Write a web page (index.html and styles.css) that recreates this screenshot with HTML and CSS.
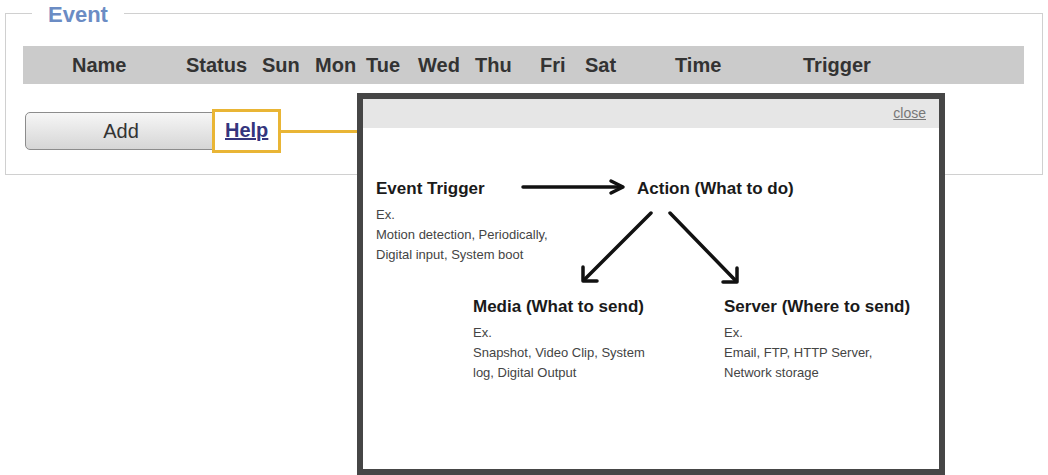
FILE: index.html
```html
<!DOCTYPE html>
<html>
<head>
<meta charset="utf-8">
<title>Event</title>
<link rel="stylesheet" href="styles.css">
</head>
<body>
<div class="page">
  <fieldset class="event">
    <legend class="event-title">Event</legend>
    <div class="thead">
      <span>Name</span>
      <span>Status</span>
      <span>Sun</span>
      <span>Mon</span>
      <span>Tue</span>
      <span>Wed</span>
      <span>Thu</span>
      <span>Fri</span>
      <span>Sat</span>
      <span>Time</span>
      <span>Trigger</span>
    </div>
    <div class="actions">
      <button class="btn-add" type="button">Add</button>
      <a class="help" href="#">Help</a>
    </div>
  </fieldset>

  <div class="popup">
    <div class="popup-bar"><a class="close" href="#">close</a></div>
    <div class="popup-body">
      <svg class="arrows" width="576" height="341" viewBox="0 0 576 341">
        <g fill="none" stroke="#111" stroke-width="3.5" stroke-linecap="round" stroke-linejoin="round">
          <line x1="160" y1="59" x2="259" y2="59"/>
          <polyline points="248,53 260,59 248,65"/>
          <line x1="288" y1="85" x2="221" y2="152"/>
          <polyline points="220,139 220,153 234,153"/>
          <line x1="307" y1="85" x2="373" y2="153"/>
          <polyline points="374,140 374,154 360,154"/>
        </g>
      </svg>
      <div class="node node-trigger">
        <h4 class="node-title">Event Trigger</h4>
        <p class="node-text">Ex.<br>Motion detection, Periodically,<br>Digital input, System boot</p>
      </div>
      <div class="node node-action">
        <h4 class="node-title">Action (What to do)</h4>
      </div>
      <div class="node node-media">
        <h4 class="node-title">Media (What to send)</h4>
        <p class="node-text">Ex.<br>Snapshot, Video Clip, System<br>log, Digital Output</p>
      </div>
      <div class="node node-server">
        <h4 class="node-title">Server (Where to send)</h4>
        <p class="node-text">Ex.<br>Email, FTP, HTTP Server,<br>Network storage</p>
      </div>
    </div>
  </div>
</div>
</body>
</html>
```

FILE: styles.css
```css
html, body {
  margin: 0;
  padding: 0;
  background: #ffffff;
}

body {
  font-family: "Liberation Sans", Arial, sans-serif;
  color: #333333;
  width: 1048px;
  height: 475px;
  overflow: hidden;
}

.page {
  position: relative;
  padding: 0 5px 0 5px;
}

.event {
  margin: 0;
  border: 1px solid #d0d0d0;
  padding: 20px 18px 21px 17px;
  min-width: 0;
}

.event-title {
  margin-left: 9px;
  padding: 4px 16px 0 16px;
  font-size: 22px;
  line-height: 22px;
  font-weight: bold;
  color: #6b8cc4;
}

.thead {
  display: grid;
  grid-template-columns: 114px 76px 53px 51px 52px 57px 65px 45px 90px 128px auto;
  align-items: center;
  height: 38px;
  padding-left: 49px;
  background: #cbcbcb;
  font-size: 20px;
  font-weight: bold;
  color: #333333;
  white-space: nowrap;
}

.actions {
  display: flex;
  align-items: center;
  margin-top: 25px;
}

.btn-add {
  width: 192px;
  height: 38px;
  margin: 0 0 0 2px;
  padding: 0;
  border: 1px solid #8c8c8c;
  border-radius: 5px;
  background: linear-gradient(#f6f6f6, #e6e6e6 50%, #d6d6d6);
  font-family: "Liberation Sans", Arial, sans-serif;
  font-size: 20px;
  color: #333333;
}

.help {
  position: relative;
  z-index: 1;
  box-sizing: border-box;
  height: 44px;
  margin-left: -5px;
  padding: 0 10px;
  border: 3px solid #e9b535;
  background: #ffffff;
  font-size: 20px;
  line-height: 36px;
  font-weight: bold;
  color: #35357e;
  text-decoration: underline;
}

.help::after {
  content: "";
  position: absolute;
  left: 100%;
  top: 50%;
  width: 78px;
  height: 3px;
  margin-top: -1px;
  margin-left: 3px;
  background: #e9b535;
}

.popup {
  position: absolute;
  left: 357px;
  top: 93px;
  z-index: 2;
  box-sizing: border-box;
  width: 588px;
  height: 382px;
  border: 6px solid #464646;
  background: #ffffff;
}

.popup-bar {
  display: flex;
  justify-content: flex-end;
  align-items: center;
  height: 29px;
  padding: 0 13px 2px 0;
  box-sizing: border-box;
  background: #e6e6e6;
}

.close {
  font-size: 14px;
  color: #777777;
  text-decoration: underline;
}

.popup-body {
  position: relative;
  height: 341px;
}

.arrows {
  position: absolute;
  left: 0;
  top: 0;
}

.node {
  position: absolute;
}

.node-trigger { left: 13px; top: 51px; }
.node-action  { left: 274px; top: 51px; }
.node-media   { left: 110px; top: 169px; }
.node-server  { left: 361px; top: 169px; }

.node-title {
  margin: 0;
  font-size: 17px;
  line-height: 20px;
  font-weight: bold;
  color: #1a1a1a;
  white-space: nowrap;
}

.node-text {
  margin: 6px 0 0 0;
  font-size: 13px;
  line-height: 20px;
  color: #444444;
  white-space: nowrap;
}
```
